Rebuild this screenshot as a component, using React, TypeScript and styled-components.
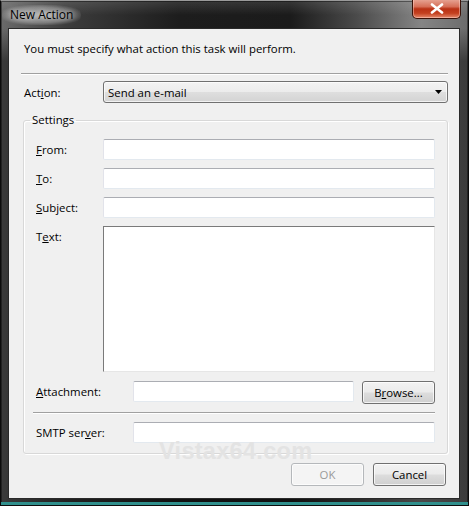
import { FC, ReactNode } from "react"
import styled, { createGlobalStyle } from "styled-components"

const GlobalStyle = createGlobalStyle`
  html, body {
    margin: 0;
    padding: 0;
    background: #1e1e1e;
  }
  * {
    box-sizing: border-box;
  }
`

const uiFont = `"Open Sans", "Noto Sans", "Liberation Sans", sans-serif`

const Window = styled.div`
  position: relative;
  display: flex;
  flex-direction: column;
  width: 469px;
  height: 506px;
  padding: 0 8px 6px 7px;
  border: 1px solid #0c0c0c;
  border-top-color: #9a9a9a;
  background:
    linear-gradient(180deg, rgba(0, 0, 0, 0) 27px, rgba(0, 0, 0, 0.45) 60px),
    linear-gradient(180deg, rgba(255, 255, 255, 0.12) 0px, rgba(255, 255, 255, 0) 14px),
    linear-gradient(90deg, #6a6a6a 0%, #3c3c3c 14%, #1d1d1d 38%, #1b1b1b 62%, #4a4a4a 76%, #858585 90%, #6c6c6c 100%);
  box-shadow: inset 0 -3px 0 #2f8f8c, inset 0 0 0 1px rgba(0, 0, 0, 0.4);
  font-family: ${uiFont};
  font-size: 11.4px;
  color: #000;
`

const TitleBar = styled.div`
  display: flex;
  align-items: flex-start;
  justify-content: space-between;
  height: 27px;
`

const Title = styled.span`
  margin: 4px 0 0 -6px;
  padding: 2px 8px;
  line-height: 16px;
  font-size: 12px;
  border-radius: 10px;
  background: radial-gradient(ellipse at center, rgba(255, 255, 255, 0.55) 0%, rgba(255, 255, 255, 0.25) 55%, rgba(255, 255, 255, 0) 78%);
  text-shadow: 0 0 6px rgba(255, 255, 255, 0.9);
`

const CloseButton = styled.div`
  display: flex;
  align-items: center;
  justify-content: center;
  width: 49px;
  height: 20px;
  margin-top: -2px;
  margin-right: -1px;
  border: 1px solid #3b1208;
  border-top: none;
  border-radius: 0 0 5px 5px;
  background: linear-gradient(180deg, #e8a898 0%, #d66f58 40%, #b93115 52%, #c4401f 75%, #e68a6c 100%);
  box-shadow: inset 0 0 0 1px rgba(255, 220, 210, 0.45);
`

const Client = styled.div`
  position: relative;
  flex: 1;
  display: flex;
  flex-direction: column;
  padding: 12px 11px 0 12px;
  background: #f0f0f0;
  border: 1px solid #2a2a2a;
`

const Intro = styled.div`
  margin-left: 3px;
  line-height: 16px;
`

const Divider = styled.div<{ inset?: number; top: number }>`
  height: 2px;
  margin-top: ${({ top }) => top}px;
  margin-left: ${({ inset }) => inset ?? 0}px;
  border-top: 1px solid #a0a0a0;
  border-bottom: 1px solid #ffffff;
`

const ActionRow = styled.div`
  display: grid;
  grid-template-columns: 79px 1fr;
  align-items: center;
  margin: 6px 0 0 3px;
  height: 22px;
`

const Select = styled.div`
  display: flex;
  align-items: center;
  justify-content: space-between;
  height: 22px;
  padding: 0 5px 0 4px;
  border: 1px solid #707070;
  border-radius: 3px;
  background: linear-gradient(180deg, #f3f3f3 0%, #ececec 48%, #dedede 52%, #d3d3d3 100%);
  box-shadow: inset 0 0 0 1px rgba(255, 255, 255, 0.7);
`

const GroupBox = styled.fieldset`
  margin: 9px 0 0 2px;
  padding: 11px 12px 10px 12px;
  border: 1px solid #d8d8d8;
  border-radius: 3px;
  box-shadow: inset 1px 1px 0 #ffffff, 1px 1px 0 #ffffff;
  min-width: 0;
`

const Legend = styled.legend`
  margin-left: -6px;
  padding: 0 2px;
  line-height: 16px;
`

const FieldGrid = styled.div<{ labelWidth: number; extra?: boolean; top?: number }>`
  display: grid;
  grid-template-columns: ${({ labelWidth, extra }) =>
    extra ? `${labelWidth}px 1fr 73px` : `${labelWidth}px 1fr`};
  column-gap: 8px;
  row-gap: 8px;
  align-items: start;
  margin-top: ${({ top }) => top ?? 0}px;
`

const Label = styled.label`
  line-height: 21px;
  white-space: nowrap;
  margin-right: -8px;
`

const TextBox = styled.div<{ tall?: boolean }>`
  height: ${({ tall }) => (tall ? 146 : 21)}px;
  background: #ffffff;
  border: 1px solid;
  border-color: ${({ tall }) =>
    tall ? "#7a7a7a #e6e6e6 #e6e6e6 #7a7a7a" : "#abadb3 #e3e9ef #e3e9ef #e2e3ea"};
  border-radius: ${({ tall }) => (tall ? 0 : 2)}px;
`

const Button = styled.div<{ disabled?: boolean }>`
  display: flex;
  align-items: center;
  justify-content: center;
  width: 73px;
  height: 23px;
  flex-shrink: 0;
  border: 1px solid ${({ disabled }) => (disabled ? "#b5b8bb" : "#707070")};
  border-radius: 3px;
  color: ${({ disabled }) => (disabled ? "#9a9a9a" : "#000")};
  background: ${({ disabled }) =>
    disabled
      ? "#f4f4f4"
      : "linear-gradient(180deg, #f2f2f2 0%, #ebebeb 48%, #dddddd 52%, #cfcfcf 100%)"};
  box-shadow: inset 0 0 0 1px rgba(255, 255, 255, 0.75);
`

const Footer = styled.div`
  display: flex;
  justify-content: flex-end;
  gap: 9px;
  margin: 9px 2px 0 0;
`

const Watermark = styled.div`
  position: absolute;
  left: 150px;
  top: 410px;
  font-family: "Liberation Sans", Arial, sans-serif;
  font-weight: 700;
  font-size: 23.5px;
  line-height: 24px;
  color: #e3e3e3;
  letter-spacing: 0.3px;
  pointer-events: none;
`

const Key: FC<{ children: ReactNode }> = ({ children }) => (
  <span style={{ textDecoration: "underline" }}>{children}</span>
)

export default function App() {
  return (
    <>
      <GlobalStyle />
      <Window>
        <TitleBar>
          <Title>New Action</Title>
          <CloseButton>
            <svg width="14" height="11" viewBox="0 0 14 11">
              <path
                d="M2 1.5 L12 9.5 M12 1.5 L2 9.5"
                stroke="#ffffff"
                strokeWidth="2.6"
                strokeLinecap="round"
              />
            </svg>
          </CloseButton>
        </TitleBar>
        <Client>
          <Intro>You must specify what action this task will perform.</Intro>
          <Divider top={16} />
          <ActionRow>
            <Label>
              Act<Key>i</Key>on:
            </Label>
            <Select>
              <span>Send an e-mail</span>
              <svg width="7" height="4" viewBox="0 0 7 4">
                <polygon points="0,0 7,0 3.5,4" fill="#000" />
              </svg>
            </Select>
          </ActionRow>
          <GroupBox>
            <Legend>Settings</Legend>
            <FieldGrid labelWidth={59}>
              <Label>
                <Key>F</Key>rom:
              </Label>
              <TextBox />
              <Label>
                <Key>T</Key>o:
              </Label>
              <TextBox />
              <Label>
                <Key>S</Key>ubject:
              </Label>
              <TextBox />
              <Label>
                T<Key>e</Key>xt:
              </Label>
              <TextBox tall />
            </FieldGrid>
            <FieldGrid labelWidth={89} extra top={9}>
              <Label>
                <Key>A</Key>ttachment:
              </Label>
              <TextBox />
              <Button>
                B<Key>r</Key>owse...
              </Button>
            </FieldGrid>
            <Divider inset={-3} top={8} />
            <FieldGrid labelWidth={89} top={8}>
              <Label>
                SMTP ser<Key>v</Key>er:
              </Label>
              <TextBox />
            </FieldGrid>
          </GroupBox>
          <Footer>
            <Button disabled>OK</Button>
            <Button>Cancel</Button>
          </Footer>
          <Watermark>Vistax64.com</Watermark>
        </Client>
      </Window>
    </>
  )
}
